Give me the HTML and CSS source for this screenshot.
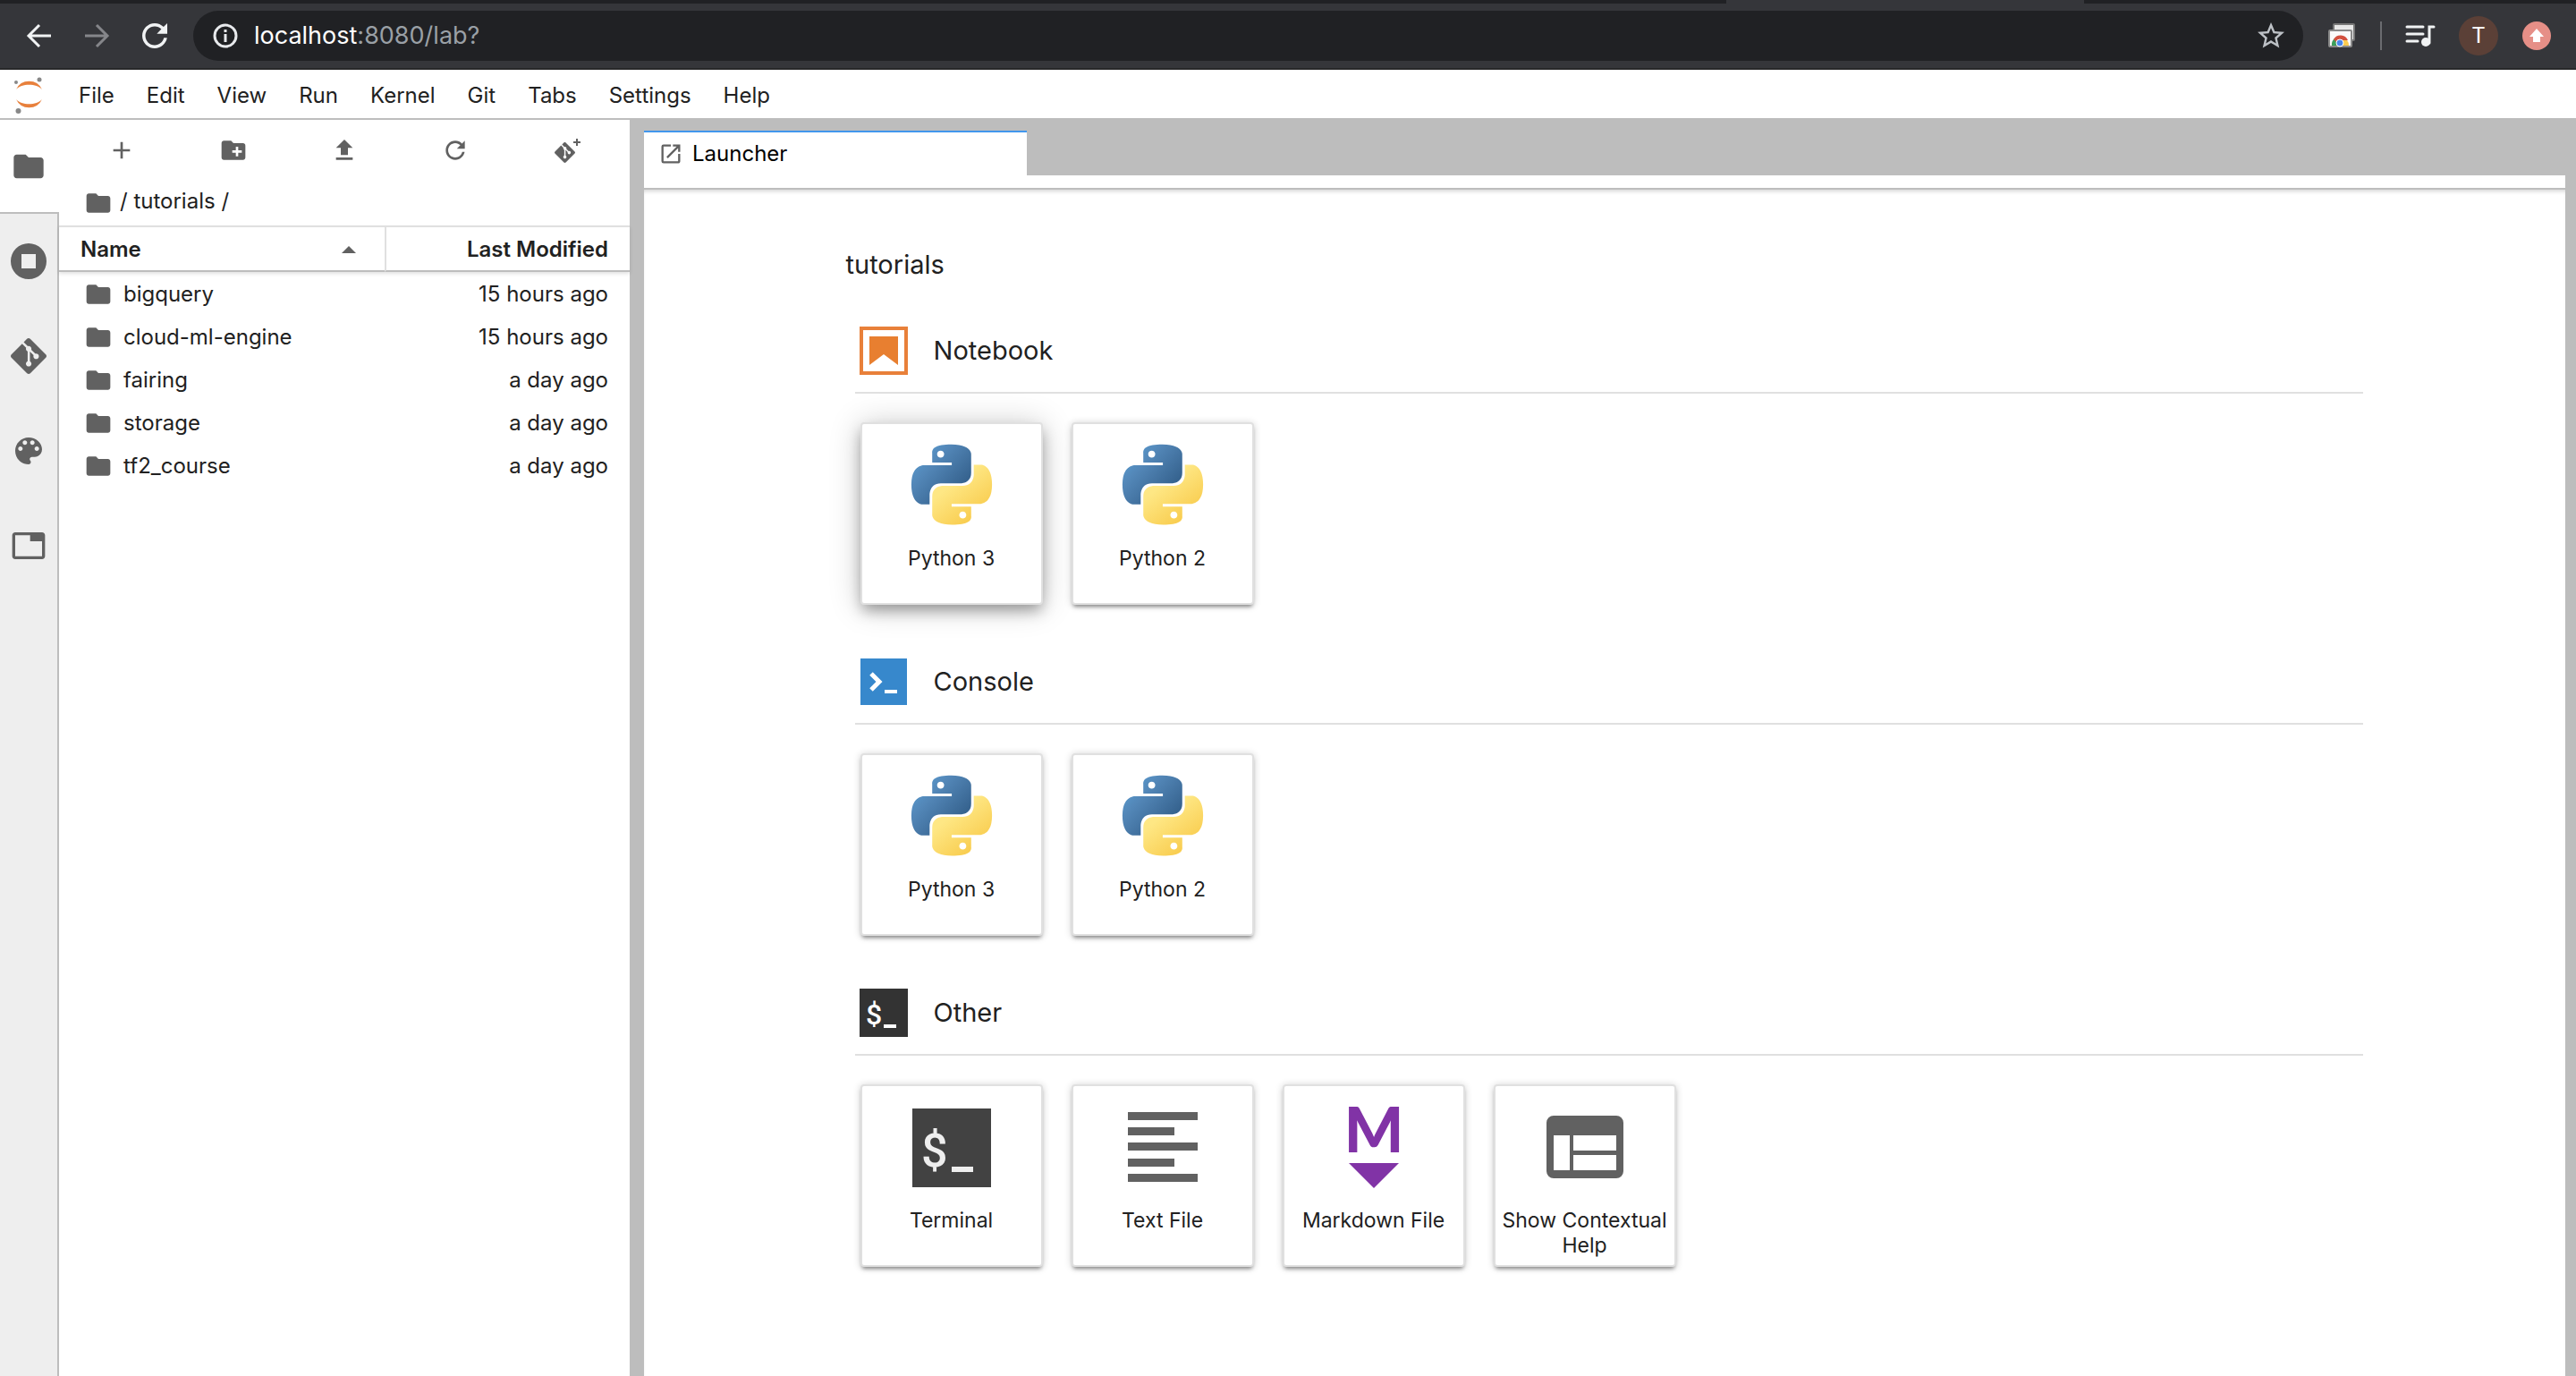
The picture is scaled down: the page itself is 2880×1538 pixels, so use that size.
FILE: index.html
```html
<!DOCTYPE html>
<html lang="en">
<head>
    <meta charset="UTF-8">
    <meta name="viewport" content="width=device-width, initial-scale=1.0">
    <title>JupyterLab</title>
    <link rel="stylesheet" href="styles.css">
</head>
<body>
    <!-- shared icons -->
    <svg class="defs" width="0" height="0" aria-hidden="true">
        <defs>
            <linearGradient id="py-blue" gradientUnits="userSpaceOnUse" x1="1" y1="1" x2="14" y2="13">
                <stop offset="0" stop-color="#5a9fd4"/>
                <stop offset="0.4" stop-color="#5387b8"/>
                <stop offset="1" stop-color="#376490"/>
            </linearGradient>
            <linearGradient id="py-yellow" gradientUnits="userSpaceOnUse" x1="5" y1="3" x2="12" y2="12">
                <stop offset="0" stop-color="#f9ce52"/>
                <stop offset="1" stop-color="#fee784"/>
            </linearGradient>
            <path id="snake" d="M14.25.18l.9.2.73.26.59.3.45.32.34.34.25.34.16.33.1.3.04.26.02.2-.01.13V8.5l-.05.63-.13.55-.21.46-.26.38-.3.31-.33.25-.35.19-.35.14-.33.1-.3.07-.26.04-.21.02H8.77l-.69.05-.59.14-.5.22-.41.27-.33.32-.27.35-.2.36-.15.37-.1.35-.07.32-.04.27-.02.21v3.06H3.17l-.21-.03-.28-.07-.32-.12-.35-.18-.36-.26-.36-.36-.35-.46-.32-.59-.28-.73-.21-.88-.14-1.05-.05-1.23.06-1.22.16-1.04.24-.87.32-.71.36-.57.4-.44.42-.33.42-.24.4-.16.36-.1.32-.05.24-.01h.16l.06.01h8.16v-.83H6.18l-.01-2.75-.02-.37.05-.34.11-.31.17-.28.25-.26.31-.23.38-.2.44-.18.51-.15.58-.12.64-.1.71-.06.77-.04.84-.02 1.27.05zm-6.3 1.98l-.23.33-.08.41.08.41.23.34.33.22.41.09.41-.09.33-.22.23-.34.08-.41-.08-.41-.23-.33-.33-.22-.41-.09-.41.09z"/>
            <symbol id="python" viewBox="-0.3 -0.2 24.6 24.6">
                <use href="#snake" fill="url(#py-blue)"/>
                <use href="#snake" fill="url(#py-yellow)" transform="rotate(180 12 12)"/>
            </symbol>
            <symbol id="folder" viewBox="0 0 24 24">
                <path d="M10 4H4c-1.1 0-1.99.9-1.99 2L2 18c0 1.1.9 2 2 2h16c1.1 0 2-.9 2-2V8c0-1.1-.9-2-2-2h-8l-2-2z"/>
            </symbol>
            <symbol id="refresh" viewBox="0 0 18 18">
                <path d="M9 13.5c-2.49 0-4.5-2.01-4.5-4.5S6.51 4.5 9 4.5c1.24 0 2.36.52 3.17 1.33L10 8h5V3l-1.76 1.76C12.15 3.68 10.66 3 9 3 5.69 3 3.01 5.69 3.01 9S5.69 15 9 15c2.97 0 5.43-2.16 5.9-5h-1.52c-.46 2-2.24 3.5-4.38 3.5z"/>
            </symbol>
            <symbol id="git" viewBox="0 0 24 24">
                <path d="M23.546 10.93L13.067.452c-.604-.603-1.582-.603-2.188 0L8.708 2.627l2.76 2.76c.645-.215 1.379-.07 1.889.441.516.515.658 1.258.438 1.9l2.658 2.66c.645-.223 1.387-.078 1.9.435.721.72.721 1.884 0 2.604-.719.719-1.881.719-2.6 0-.539-.541-.674-1.337-.404-1.996L12.86 8.955v6.525c.176.086.342.203.488.348.713.721.713 1.883 0 2.6-.719.721-1.889.721-2.609 0-.719-.719-.719-1.879 0-2.598.182-.18.387-.316.605-.406V8.835c-.217-.091-.424-.222-.6-.401-.545-.545-.676-1.342-.396-2.009L7.636 3.7.45 10.881c-.6.605-.6 1.584 0 2.189l10.48 10.477c.604.604 1.582.604 2.186 0l10.43-10.43c.605-.603.605-1.582 0-2.187"/>
            </symbol>
        </defs>
    </svg>

    <div class="tabstrip"><span class="current"></span></div>
    <header class="browser">
        <div class="nav">
            <button type="button" aria-label="Back">
                <svg width="40" height="40" viewBox="0 0 40 40" fill="none" stroke="#f1f3f4" stroke-width="3"><path d="M33 20H9M20 8L8 20l12 12"/></svg>
            </button>
            <button type="button" aria-label="Forward">
                <svg width="40" height="40" viewBox="0 0 40 40" fill="none" stroke="#85868a" stroke-width="3"><path d="M7 20h24M20 8l12 12-12 12"/></svg>
            </button>
            <button type="button" aria-label="Reload">
                <svg width="42" height="42" fill="#f1f3f4"><use href="#refresh"/></svg>
            </button>
        </div>
        <div class="address">
            <svg width="28" height="28" viewBox="0 0 28 28" fill="none" stroke="#e8eaed" stroke-width="3"><circle cx="14" cy="14" r="12"/><path d="M14 12v9M14 7v3"/></svg>
            <span class="url">localhost<span class="path">:8080/lab?</span></span>
            <button type="button" aria-label="Bookmark this page">
                <svg width="36" height="36" viewBox="0 0 24 24" fill="#bdc1c6"><path d="M22 9.24l-7.19-.62L12 2 9.19 8.63 2 9.24l5.46 4.73L5.82 21 12 17.27 18.18 21l-1.63-7.03L22 9.24zM12 15.4l-3.76 2.27 1-4.28-3.32-2.88 4.38-.38L12 6.1l1.71 4.04 4.38.38-3.32 2.88 1 4.28L12 15.4z"/></svg>
            </button>
        </div>
        <div class="extensions">
            <button type="button" aria-label="Chrome extension">
                <svg width="32" height="28" viewBox="0 0 32 28">
                    <rect x="7" y="1" width="23" height="18" rx="1" fill="#e8e8e8" stroke="#777" stroke-width="2"/>
                    <rect x="2" y="8" width="25" height="18" rx="1" fill="#fafafa" stroke="#8a8a8a" stroke-width="2"/>
                    <path d="M5 25a9 9 0 0 1 3-8l4 8z" fill="#3c9e5b"/>
                    <path d="M24 25a9 9 0 0 0-2-6h-8v6z" fill="#fbcb4e"/>
                    <path d="M7 18a9 9 0 0 1 16 1h-9l-3 3z" fill="#d2503f"/>
                    <circle cx="14" cy="22" r="4" fill="#4a86ea" stroke="#fff"/>
                </svg>
            </button>
            <span class="divider"></span>
            <button type="button" aria-label="Media controls">
                <svg width="32" height="26" viewBox="0 0 32 26"><path d="M1 3h18M1 11h18M1 19h12M26 21V3h5" fill="none" stroke="#f1f3f4" stroke-width="3" stroke-linecap="round"/><circle cx="22" cy="20" r="5" fill="#f1f3f4"/></svg>
            </button>
            <button type="button" class="avatar">T</button>
            <button type="button" class="update" aria-label="Update">
                <svg width="18" height="18" viewBox="0 0 18 18" fill="#fff"><path d="M9 1l8 9h-4v6H5v-6H1z"/></svg>
            </button>
        </div>
    </header>

    <nav class="menubar">
        <svg width="32" height="42" viewBox="0 0 32 42">
            <path d="M2 16A16 16 0 0 1 31 16C25 9 8 9 2 16zM2 27A16 16 0 0 0 31 27C25 34 8 34 2 27z" fill="#e8803c"/>
            <g fill="#888"><circle cx="28" cy="5" r="2.5"/><circle cx="2" cy="8" r="2"/><circle cx="4.5" cy="40" r="3"/></g>
        </svg>
        <button type="button">File</button>
        <button type="button">Edit</button>
        <button type="button">View</button>
        <button type="button">Run</button>
        <button type="button">Kernel</button>
        <button type="button">Git</button>
        <button type="button">Tabs</button>
        <button type="button">Settings</button>
        <button type="button">Help</button>
    </nav>

    <div class="workspace">
        <aside class="sidebar">
            <button type="button" class="active" aria-label="File Browser">
                <svg width="40" height="40"><use href="#folder"/></svg>
            </button>
            <button type="button" aria-label="Running Terminals and Kernels">
                <svg width="40" height="40" viewBox="0 0 40 40"><path fill-rule="evenodd" d="M20 0a20 20 0 1 0 0 40a20 20 0 1 0 0-40zM12 12h16v16H12z"/></svg>
            </button>
            <button type="button" aria-label="Git">
                <svg width="40" height="40"><use href="#git"/></svg>
            </button>
            <button type="button" aria-label="Commands">
                <svg width="40" height="40" viewBox="0 0 24 24"><path d="M12 3c-4.97 0-9 4.03-9 9s4.03 9 9 9c.83 0 1.5-.67 1.5-1.5 0-.39-.15-.74-.39-1.01-.23-.26-.38-.61-.38-.99 0-.83.67-1.5 1.5-1.5H16c2.76 0 5-2.24 5-5 0-4.42-4.03-8-9-8zm-5.5 9c-.83 0-1.5-.67-1.5-1.5S5.67 9 6.5 9 8 9.67 8 10.5 7.33 12 6.5 12zm3-4C8.67 8 8 7.33 8 6.5S8.67 5 9.5 5s1.5.67 1.5 1.5S10.33 8 9.5 8zm5 0c-.83 0-1.5-.67-1.5-1.5S13.67 5 14.5 5s1.5.67 1.5 1.5S15.33 8 14.5 8zm3 4c-.83 0-1.5-.67-1.5-1.5S16.67 9 17.5 9s1.5.67 1.5 1.5-.67 1.5-1.5 1.5z"/></svg>
            </button>
            <button type="button" aria-label="Open Tabs">
                <svg width="40" height="40" viewBox="0 0 24 24"><path d="M21 3H3c-1.1 0-2 .9-2 2v14c0 1.1.9 2 2 2h18c1.1 0 2-.9 2-2V5c0-1.1-.9-2-2-2zm0 16H3V5h10v4h8v10z"/></svg>
            </button>
        </aside>

        <section class="filebrowser">
            <div class="toolbar">
                <button type="button" aria-label="New Launcher">
                    <svg width="32" height="32" viewBox="0 0 24 24"><path d="M19 13h-6v6h-2v-6H5v-2h6V5h2v6h6v2z"/></svg>
                </button>
                <button type="button" aria-label="New Folder">
                    <svg width="32" height="32" viewBox="0 0 24 24"><path d="M20 6h-8l-2-2H4c-1.11 0-1.99.89-1.99 2L2 18c0 1.11.89 2 2 2h16c1.11 0 2-.89 2-2V8c0-1.11-.89-2-2-2zm-1 8h-3v3h-2v-3h-3v-2h3V9h2v3h3v2z"/></svg>
                </button>
                <button type="button" aria-label="Upload Files">
                    <svg width="32" height="32" viewBox="0 0 24 24"><path d="M9 16h6v-6h4l-7-7-7 7h4zm-4 2h14v2H5z"/></svg>
                </button>
                <button type="button" aria-label="Refresh File List">
                    <svg width="32" height="32"><use href="#refresh"/></svg>
                </button>
                <button type="button" aria-label="Git Clone">
                    <svg width="32" height="32" viewBox="0 0 32 32"><use href="#git" x="2" y="7" width="23" height="23"/><path d="M23 6h3V3h2v3h3v2h-3v3h-2V8h-3z"/></svg>
                </button>
            </div>
            <div class="breadcrumbs">
                <svg width="32" height="32"><use href="#folder"/></svg>
                <span>/ <a href="#">tutorials</a> /</span>
            </div>
            <table class="listing">
                <thead>
                    <tr>
                        <th><span class="sort">Name <svg width="16" height="8" viewBox="0 0 16 8"><path d="M0 8l8-8 8 8z"/></svg></span></th>
                        <th class="modified">Last Modified</th>
                    </tr>
                </thead>
                <tbody>
                    <tr>
                        <td><span class="item"><svg width="32" height="32"><use href="#folder"/></svg>bigquery</span></td>
                        <td class="modified">15 hours ago</td>
                    </tr>
                    <tr>
                        <td><span class="item"><svg width="32" height="32"><use href="#folder"/></svg>cloud-ml-engine</span></td>
                        <td class="modified">15 hours ago</td>
                    </tr>
                    <tr>
                        <td><span class="item"><svg width="32" height="32"><use href="#folder"/></svg>fairing</span></td>
                        <td class="modified">a day ago</td>
                    </tr>
                    <tr>
                        <td><span class="item"><svg width="32" height="32"><use href="#folder"/></svg>storage</span></td>
                        <td class="modified">a day ago</td>
                    </tr>
                    <tr>
                        <td><span class="item"><svg width="32" height="32"><use href="#folder"/></svg>tf2_course</span></td>
                        <td class="modified">a day ago</td>
                    </tr>
                </tbody>
            </table>
        </section>

        <main class="dock">
            <div class="tabbar">
                <button type="button" class="tab">
                    <svg width="28" height="28" viewBox="0 0 24 24"><path d="M19 19H5V5h7V3H5a2 2 0 0 0-2 2v14a2 2 0 0 0 2 2h14c1.1 0 2-.9 2-2v-7h-2v7zM14 3v2h3.59l-9.83 9.83 1.41 1.41L19 6.41V10h2V3h-7z"/></svg>
                    Launcher
                </button>
            </div>
            <div class="launcher">
                <h1>tutorials</h1>

                <section>
                    <h2>
                        <svg width="56" height="56" viewBox="0 0 56 56"><path d="M3 3h50v50H3z" fill="none" stroke="#e8803a" stroke-width="4"/><path d="M12 12h32v32L28 32 12 44z" fill="#e87f30"/></svg>
                        Notebook
                    </h2>
                    <div class="cards">
                        <button type="button" class="card hovered">
                            <svg width="92" height="92"><use href="#python"/></svg>
                            <span>Python 3</span>
                        </button>
                        <button type="button" class="card">
                            <svg width="92" height="92"><use href="#python"/></svg>
                            <span>Python 2</span>
                        </button>
                    </div>
                </section>

                <section>
                    <h2>
                        <svg width="56" height="56" viewBox="0 0 56 56"><path d="M2 2h52v52H2z" fill="#3788cc"/><path d="M14 19l9 9-9 9" fill="none" stroke="#fff" stroke-width="5"/><path d="M29 37h14v4H29z" fill="#fff"/></svg>
                        Console
                    </h2>
                    <div class="cards">
                        <button type="button" class="card">
                            <svg width="92" height="92"><use href="#python"/></svg>
                            <span>Python 3</span>
                        </button>
                        <button type="button" class="card">
                            <svg width="92" height="92"><use href="#python"/></svg>
                            <span>Python 2</span>
                        </button>
                    </div>
                </section>

                <section>
                    <h2>
                        <svg class="prompt" width="56" height="56" viewBox="0 0 56 56"><path d="M1 1h54v54H1z" fill="#333"/><text x="8" y="41" font-size="32" fill="#fff">$</text><path d="M28 41h14v4H28z" fill="#fff"/></svg>
                        Other
                    </h2>
                    <div class="cards">
                        <button type="button" class="card">
                            <svg class="prompt" width="92" height="92" viewBox="0 0 92 92"><path d="M2 3h88v88H2z" fill="#424242"/><text x="12" y="68" font-size="52" fill="#eee">$</text><path d="M46 68h24v6H46z" fill="#eee"/></svg>
                            <span>Terminal</span>
                        </button>
                        <button type="button" class="card">
                            <svg width="92" height="92" viewBox="0 0 92 92"><path d="M7 7h78v9H7zM7 24h52v9H7zM7 41h78v9H7zM7 59h52v9H7zM7 76h78v9H7z"/></svg>
                            <span>Text File</span>
                        </button>
                        <button type="button" class="card">
                            <svg class="markdown" width="92" height="92" viewBox="0 0 92 92" fill="#8133a6"><text x="46" y="52" font-size="70" text-anchor="middle">M</text><path d="M18 64h56L46 92z"/></svg>
                            <span>Markdown File</span>
                        </button>
                        <button type="button" class="card">
                            <svg width="92" height="92" viewBox="0 0 92 92"><path fill-rule="evenodd" d="M11 11h70a8 8 0 0 1 8 8v54a8 8 0 0 1-8 8H11a8 8 0 0 1-8-8V19a8 8 0 0 1 8-8zM11 33v39h18V33zM33 33v17h48V33zM33 55v17h48V55z"/></svg>
                            <span>Show Contextual Help</span>
                        </button>
                    </div>
                </section>
            </div>
        </main>
    </div>
</body>
</html>
```
FILE: styles.css
```css
* {
    box-sizing: border-box;
}

body {
    margin: 0;
    min-height: 100vh;
    display: flex;
    flex-direction: column;
    font-family: Inter, "Liberation Sans", sans-serif;
    font-size: 24px;
    line-height: 32px;
    color: #212121;
    background-color: #fff;
}

button {
    display: flex;
    align-items: center;
    justify-content: center;
    margin: 0;
    padding: 0;
    border: 0;
    background: none;
    font: inherit;
    color: inherit;
}

svg {
    flex: none;
    overflow: visible;
}

svg:not([fill]) {
    fill: #616161;
}

a {
    color: inherit;
    text-decoration: none;
}

.defs {
    position: absolute;
}

/* browser chrome */
.tabstrip {
    display: flex;
    height: 4px;
    padding-left: 67%;
    background-color: #202124;
}

.current {
    width: 400px;
    background-color: #35363a;
}

.browser {
    display: flex;
    align-items: center;
    height: 74px;
    padding: 0 28px 0 24px;
    background-color: #35363a;
    border-bottom: 2px solid #28292a;
}

.nav {
    display: flex;
    align-items: center;
    gap: 24px;
    width: 192px;
}

.address {
    flex: 1;
    display: flex;
    align-items: center;
    height: 56px;
    padding: 0 18px 0 22px;
    border-radius: 28px;
    background-color: #202124;
}

.url {
    flex: 1;
    margin-left: 18px;
    font-size: 27px;
    color: #fff;
}

.path {
    color: #9aa0a6;
}

.extensions {
    display: flex;
    align-items: center;
    gap: 27px;
    padding-left: 27px;
}

.divider {
    width: 2px;
    height: 32px;
    background-color: #6b6c70;
}

.avatar {
    width: 44px;
    height: 44px;
    border-radius: 50%;
    background-color: #5b4037;
    color: #fff;
}

.update {
    width: 32px;
    height: 32px;
    border-radius: 50%;
    background-color: #e68f87;
}

/* menu */
.menubar {
    display: flex;
    align-items: center;
    height: 56px;
    padding-left: 16px;
    border-bottom: 2px solid #bdbdbd;
}

.menubar svg {
    margin-right: 22px;
}

.menubar button {
    padding: 4px 18px 0;
}

.workspace {
    flex: 1;
    display: flex;
    background-color: #bdbdbd;
}

/* left icon strip */
.sidebar {
    width: 66px;
    background-color: #eee;
    border-right: 2px solid #bdbdbd;
}

.sidebar button {
    width: 64px;
    height: 106px;
}

.sidebar .active {
    width: 66px;
    height: 105px;
    padding-right: 2px;
    background-color: #fff;
    border-bottom: 2px solid #bdbdbd;
}

/* file browser */
.filebrowser {
    width: 638px;
    background-color: #fff;
}

.toolbar {
    display: flex;
    padding: 18px 8px;
}

.toolbar button {
    flex: 1;
}

.breadcrumbs {
    display: flex;
    align-items: center;
    gap: 8px;
    height: 50px;
    padding-left: 28px;
}

.breadcrumbs span {
    padding-bottom: 4px;
}

.listing {
    width: 100%;
    border-collapse: separate;
    border-spacing: 0;
}

th {
    height: 52px;
    padding: 2px 24px 0;
    border-top: 2px solid #e0e0e0;
    border-bottom: 2px solid #bdbdbd;
    font-weight: 600;
    text-align: left;
}

thead {
    box-shadow: 0 2px 4px rgba(0, 0, 0, 0.12);
}

th.modified {
    width: 274px;
    border-left: 2px solid #e0e0e0;
}

.sort {
    display: flex;
    align-items: center;
    justify-content: space-between;
    padding-right: 8px;
}

td {
    height: 48px;
    padding: 2px 24px 0 28px;
}

.modified {
    text-align: right;
}

.item {
    display: flex;
    align-items: center;
    gap: 12px;
}

/* main area */
.dock {
    flex: 1;
    display: flex;
    flex-direction: column;
    margin: 0 12px 0 16px;
}

.tabbar {
    display: flex;
    padding-top: 12px;
    border-bottom: 14px solid #fff;
}

.tab {
    justify-content: flex-start;
    gap: 10px;
    width: 428px;
    height: 50px;
    padding-left: 16px;
    background-color: #fff;
    border-top: 2px solid #4296ec;
    color: #000;
}

.launcher {
    flex: 1;
    padding: 64px 10.5% 0;
    background-color: #fff;
    border-top: 2px solid #bdbdbd;
    box-shadow: inset 0 4px 4px -2px rgba(0, 0, 0, 0.16);
}

h1,
h2 {
    margin: 0;
    font-size: 29px;
    font-weight: 400;
}

h1 {
    line-height: 40px;
}

.launcher section {
    padding-left: 10px;
}

h2 {
    display: flex;
    align-items: center;
    gap: 28px;
    margin-top: 48px;
    padding: 0 4px 18px;
    border-bottom: 2px solid #e0e0e0;
}

.cards {
    display: flex;
    gap: 32px;
    padding: 32px 6px 10px;
}

.card {
    flex-direction: column;
    justify-content: flex-start;
    gap: 22px;
    width: 204px;
    height: 204px;
    padding-top: 22px;
    border: 2px solid #e0e0e0;
    border-radius: 4px;
    background-color: #fff;
    box-shadow: 0 4px 4px -2px rgba(0, 0, 0, 0.4), 0 1px 8px rgba(0, 0, 0, 0.2);
    font-size: 23px;
    line-height: 28px;
}

.hovered {
    box-shadow: 0 8px 16px -2px rgba(0, 0, 0, 0.35), 0 2px 36px rgba(0, 0, 0, 0.2);
}

.prompt text {
    font-family: Roboto, sans-serif;
    font-weight: 500;
}

.markdown text {
    font-family: Lato, sans-serif;
    font-weight: 900;
}
```
